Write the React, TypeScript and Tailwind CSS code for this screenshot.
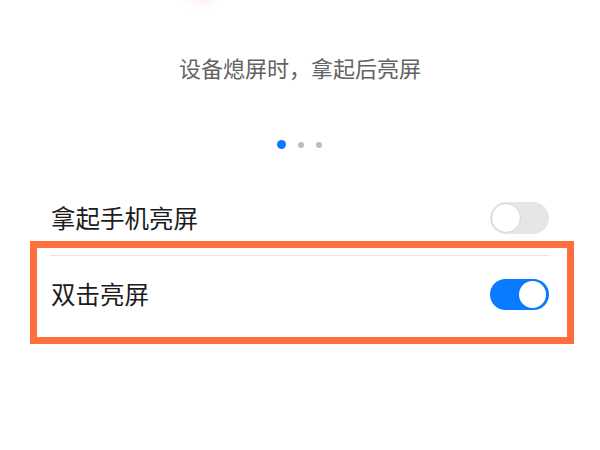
import React from "react";

const font = { fontFamily: '"Noto Sans CJK SC", "Noto Sans", sans-serif' };

function Toggle({ on }: { on: boolean }) {
  return on ? (
    <div className="flex h-[31px] w-[59px] items-center justify-end rounded-full bg-[#0a7bff] pr-[3px]">
      <div className="h-[27px] w-[27px] rounded-full bg-white" />
    </div>
  ) : (
    <div className="flex h-[32px] w-[59px] items-center rounded-full bg-[#e6e6e6] pl-[1px]">
      <div className="h-[30px] w-[30px] rounded-full border border-[#d4d4d4] bg-white" />
    </div>
  );
}

export default function App() {
  return (
    <div className="relative h-[450px] w-[600px] overflow-hidden bg-white" style={font}>
      {/* faint edge of the illustration above */}
      <div className="absolute left-[184px] top-[-30px] h-[33px] w-[38px] rounded-full bg-[#fbe3da] opacity-50 blur-[3px]" />

      <div className="flex flex-col">
        <p className="mt-[55px] text-center text-[22px] leading-[24px] text-[#636363]">
          设备熄屏时，拿起后亮屏
        </p>

        <div className="mt-[61px] flex items-center justify-center gap-[12px] pr-[2px]">
          <span className="h-[9px] w-[9px] rounded-full bg-[#0a7bff]" />
          <span className="h-[6px] w-[6px] rounded-full bg-[#bdbdbd]" />
          <span className="h-[6px] w-[6px] rounded-full bg-[#bdbdbd]" />
        </div>

        <div className="mt-[46px] pl-[30px] pr-[26px]">
          <div className="flex h-[46px] items-center justify-between pl-[21px] pr-[25px]">
            <span className="text-[24.5px] text-[#1c1c1c]">拿起手机亮屏</span>
            <Toggle on={false} />
          </div>

          <div className="border-[7px] border-[#ff6e3d] pb-[5px] pl-[13px] pr-[18px] pt-[7px]">
            <div className="h-px bg-[#e5e5e5]" />
            <div className="flex h-[76px] items-center justify-between pl-[1px]">
              <span className="text-[24.5px] text-[#1c1c1c]">双击亮屏</span>
              <Toggle on={true} />
            </div>
          </div>
        </div>
      </div>
    </div>
  );
}
